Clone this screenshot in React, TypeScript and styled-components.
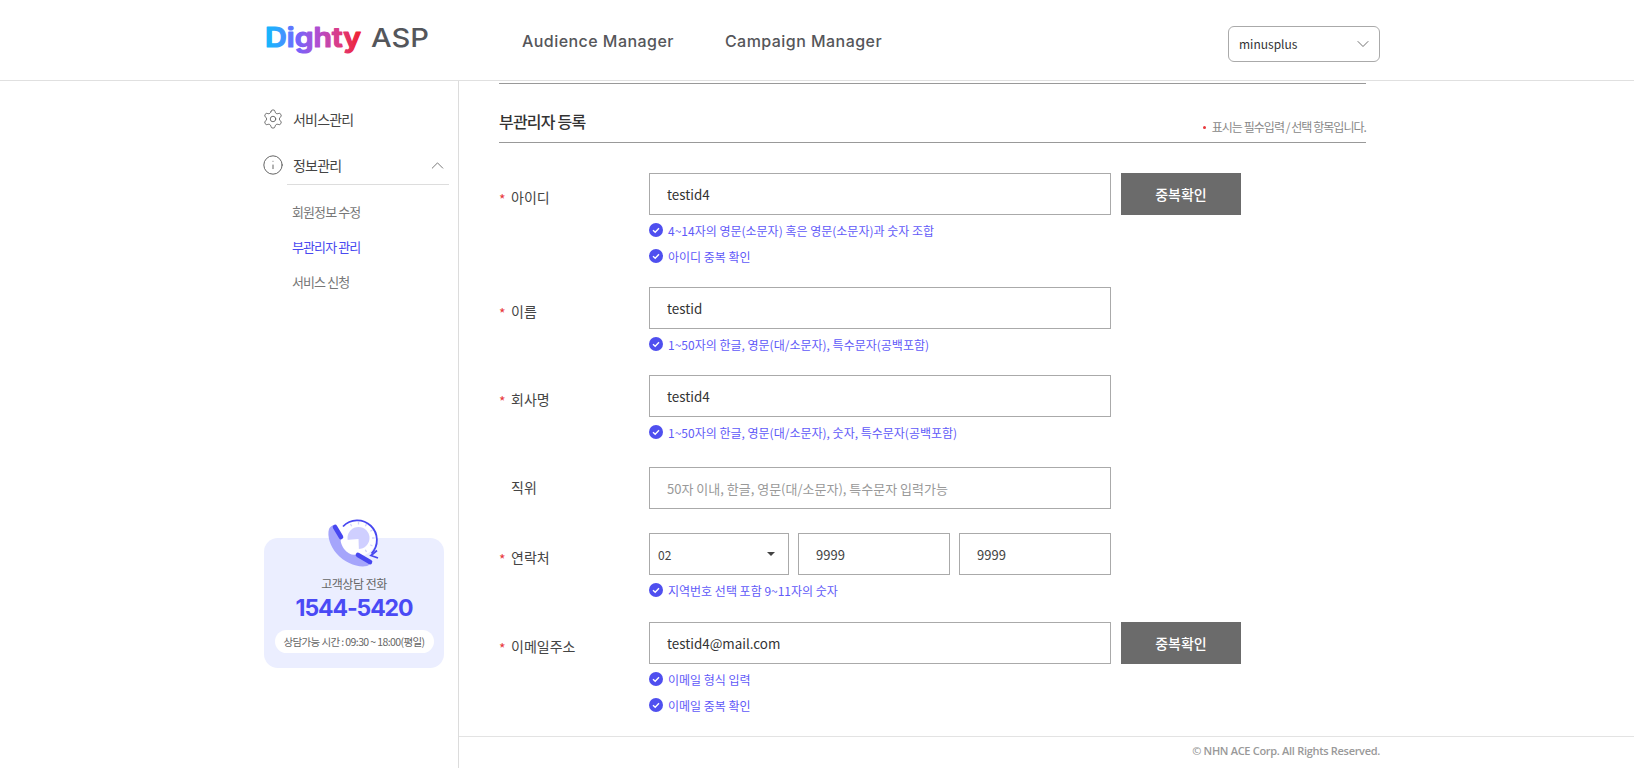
import React from "react";
import styled, { createGlobalStyle } from "styled-components";
import { ChevronDown, ChevronUp, Info, Settings } from "lucide-react";

const KR = `"Noto Sans CJK KR", "Noto Sans", sans-serif`;

const GlobalStyle = createGlobalStyle`
  html, body {
    margin: 0;
    padding: 0;
    background: #fff;
    overflow: hidden;
  }
  * {
    box-sizing: border-box;
  }
`;

const CheckIcon = () => (
  <svg width="14" height="14" viewBox="0 0 14 14" style={{ flex: "none" }}>
    <circle cx="7" cy="7" r="7" fill="#4f4fef" />
    <path d="M4 7.2 L6.2 9.2 L10 5.2" fill="none" stroke="#fff" strokeWidth="1.4" />
  </svg>
);

const Logo = () => (
  <svg width="170" height="48" viewBox="0 0 170 48">
    <defs>
      <linearGradient id="dighty" gradientUnits="userSpaceOnUse" x1="1" x2="97" y1="0" y2="0">
        <stop offset="0" stopColor="#12b8fb" />
        <stop offset="0.14" stopColor="#2fa4ff" />
        <stop offset="0.32" stopColor="#6f66ff" />
        <stop offset="0.55" stopColor="#b04ed0" />
        <stop offset="0.78" stopColor="#de3a80" />
        <stop offset="1" stopColor="#f0202c" />
      </linearGradient>
    </defs>
    <text
      x="1"
      y="30"
      fontFamily="Inter, sans-serif"
      fontWeight="600"
      fontSize="27"
      textLength="96"
      lengthAdjust="spacingAndGlyphs"
      fill="url(#dighty)"
      stroke="url(#dighty)"
      strokeWidth="1.2"
      strokeLinejoin="round"
    >
      Dighty
    </text>
    <text x="107" y="30" fontFamily="Inter, sans-serif" fontWeight="500" fontSize="26" textLength="58" lengthAdjust="spacingAndGlyphs" fill="#54565b">
      ASP
    </text>
  </svg>
);

const PhoneArt = () => (
  <svg width="70" height="62" viewBox="0 0 70 62">
    <circle cx="38.5" cy="26" r="18" fill="#fff" />
    <circle cx="38.5" cy="26" r="11" fill="#cfcfff" />
    <path d="M38.5 27 L39 41 L30 42 L21 29 L26 28 Z" fill="#fff" />
    <g stroke="#d2d3fa" strokeWidth="1.3">
      <path d="M38.5 10 v2.5 M46.5 12 l-1.2 2.2 M52.5 18 l-2.2 1.2 M54.5 26 h-2.5 M52.5 34 l-2.2 -1.2 M46.5 40 l-1.2 -2.2 M30.5 12 l1.2 2.2" />
    </g>
    <path d="M23 14.5 A19.5 19.5 0 1 1 51.5 41.5" fill="none" stroke="#4747f0" strokeWidth="1.8" />
    <path d="M57 38.5 L51 43.5 L58 46" fill="none" stroke="#4747f0" strokeWidth="1.8" />
    <path d="M9 17 C7 24 10 34 17 42 C25 51 38 56 47 54 C50 53 52 50 51 49 L38 42 C33 44 28 42 24 37 C20 31 20 27 22 24 L15 13 C12 13 10 15 9 17 Z" fill="#a5a5fb" />
    <path d="M15 15 L21 25" stroke="#4747f0" strokeWidth="4.6" strokeLinecap="round" />
    <path d="M38 43 L50 50" stroke="#4747f0" strokeWidth="4.6" strokeLinecap="round" />
  </svg>
);

const App = () => {
  return (
    <Page>
      <GlobalStyle />
      <Header>
        <LogoLink>
          <Logo />
        </LogoLink>
        <TopNav>
          <TopNavItem>Audience Manager</TopNavItem>
          <TopNavItem>Campaign Manager</TopNavItem>
        </TopNav>
        <AccountSelect>
          <span>minusplus</span>
          <ChevronDown size={20} strokeWidth={1} color="#555" />
        </AccountSelect>
      </Header>
      <Body>
        <Sidebar>
          <div>
            <MenuTitle>
              <Settings size={22} strokeWidth={0.9} color="#555" />
              <span>서비스관리</span>
            </MenuTitle>
            <MenuTitle $open>
              <Info size={22} strokeWidth={1} color="#555" />
              <span>정보관리</span>
              <ChevronUp size={21} strokeWidth={1} color="#666" />
            </MenuTitle>
            <SubMenu>
              <SubItem>회원정보 수정</SubItem>
              <SubItem $active>부관리자 관리</SubItem>
              <SubItem>서비스 신청</SubItem>
            </SubMenu>
          </div>
          <CallCard>
            <CallArt>
              <PhoneArt />
            </CallArt>
            <CallLabel>고객상담 전화</CallLabel>
            <CallNumber>1544-5420</CallNumber>
            <CallHours>상담가능 시간 : 09:30 ~ 18:00(평일)</CallHours>
          </CallCard>
        </Sidebar>
        <Main>
          <Content>
            <TopRule />
            <TitleRow>
              <Title>부관리자 등록</Title>
              <Legend>
                <LegendDot />
                표시는 필수입력 / 선택 항목입니다.
              </Legend>
            </TitleRow>
            <FormRow
              label="아이디"
              required
              value="testid4"
              button
              hints={["4~14자의 영문(소문자) 혹은 영문(소문자)과 숫자 조합", "아이디 중복 확인"]}
            />
            <FormRow label="이름" required value="testid" hints={["1~50자의 한글, 영문(대/소문자), 특수문자(공백포함)"]} />
            <FormRow
              label="회사명"
              required
              value="testid4"
              gap={21}
              hints={["1~50자의 한글, 영문(대/소문자), 숫자, 특수문자(공백포함)"]}
            />
            <FormRow label="직위" placeholder="50자 이내, 한글, 영문(대/소문자), 특수문자 입력가능" gap={24} labelTop={10} />
            <Row $gap={18}>
              <Label $top={14}>
                <Star>*</Star>연락처
              </Label>
              <Field>
                <PhoneLine>
                  <AreaSelect>
                    02
                    <Caret />
                  </AreaSelect>
                  <PhoneInput readOnly value="9999" />
                  <PhoneInput readOnly value="9999" />
                </PhoneLine>
                <HintList>
                  <HintItem>
                    <CheckIcon />
                    지역번호 선택 포함 9~11자의 숫자
                  </HintItem>
                </HintList>
              </Field>
            </Row>
            <FormRow label="이메일주소" required value="testid4@mail.com" button gap={0} hints={["이메일 형식 입력", "이메일 중복 확인"]} />
          </Content>
          <Footer>© NHN ACE Corp. All Rights Reserved.</Footer>
        </Main>
      </Body>
    </Page>
  );
};

const FormRow = ({
  label,
  required,
  value,
  placeholder,
  button,
  hints = [],
  gap = 17,
  labelTop = 14,
}: {
  label: string;
  required?: boolean;
  value?: string;
  placeholder?: string;
  button?: boolean;
  hints?: string[];
  gap?: number;
  labelTop?: number;
}) => (
  <Row $gap={gap}>
    <Label $top={labelTop}>
      {required && <Star>*</Star>}
      {label}
    </Label>
    <Field>
      <InputLine>
        <TextInput readOnly value={value} placeholder={placeholder} />
        {button && <CheckButton>중복확인</CheckButton>}
      </InputLine>
      {hints.length > 0 && (
        <HintList>
          {hints.map((h) => (
            <HintItem key={h}>
              <CheckIcon />
              {h}
            </HintItem>
          ))}
        </HintList>
      )}
    </Field>
  </Row>
);

export default App;

const Page = styled.div`
  width: 100%;
  height: 768px;
  display: flex;
  flex-direction: column;
  overflow: hidden;
  font-family: ${KR};
  color: #333;
`;
const Header = styled.header`
  height: 81px;
  flex: none;
  display: flex;
  align-items: flex-start;
  padding: 0 254px 0 264px;
  border-bottom: 1px solid #e0e0e0;
`;
const LogoLink = styled.div`
  width: 258px;
  padding-top: 17px;
`;
const TopNav = styled.nav`
  flex: 1;
  display: flex;
  gap: 51px;
  padding-top: 30px;
`;
const TopNavItem = styled.div`
  font-family: Inter, sans-serif;
  font-size: 16px;
  font-weight: 500;
  line-height: 22px;
  letter-spacing: 0.45px;
  color: #55565a;
`;
const AccountSelect = styled.div`
  width: 152px;
  height: 36px;
  margin-top: 26px;
  display: flex;
  justify-content: space-between;
  align-items: center;
  padding: 0 6px 0 10px;
  border: 1px solid #aaa;
  border-radius: 6px;
  font-size: 12px;
  color: #333;
  span {
    padding-bottom: 2px;
  }
`;
const Body = styled.div`
  flex: 1;
  display: flex;
  min-height: 0;
`;
const Sidebar = styled.aside`
  width: 459px;
  flex: none;
  display: flex;
  flex-direction: column;
  justify-content: space-between;
  padding: 21px 0 100px 264px;
  border-right: 1px solid #dcdcdc;
`;
const MenuTitle = styled.div<{ $open?: boolean }>`
  display: flex;
  align-items: center;
  gap: 9px;
  height: 34px;
  margin-left: -2px;
  margin-bottom: ${(p) => (p.$open ? "0" : "12px")};
  font-size: 14px;
  letter-spacing: -0.8px;
  color: #444;
  span {
    flex: 1;
  }
  svg:last-child:not(:first-child) {
    margin-right: 10px;
  }
`;
const SubMenu = styled.ul`
  list-style: none;
  margin: 2px 9px 0 23px;
  padding: 9px 0 0 5px;
  border-top: 1px solid #ddd;
`;
const SubItem = styled.li<{ $active?: boolean }>`
  height: 35px;
  display: flex;
  align-items: center;
  font-size: 13px;
  letter-spacing: -0.9px;
  color: ${(p) => (p.$active ? "#4a4af0" : "#777")};
`;
const CallCard = styled.div`
  position: relative;
  width: 180px;
  height: 130px;
  padding-top: 37px;
  display: flex;
  flex-direction: column;
  align-items: center;
  background: #ebeeff;
  border-radius: 14px;
`;
const CallArt = styled.div`
  position: absolute;
  top: -26px;
  left: 56px;
  line-height: 0;
`;
const CallLabel = styled.div`
  font-size: 12px;
  line-height: 18px;
  letter-spacing: -0.5px;
  color: #666;
`;
const CallNumber = styled.div`
  font-family: Inter, sans-serif;
  font-size: 23px;
  font-weight: 700;
  line-height: 30px;
  letter-spacing: -1.1px;
  color: #4a4af5;
`;
const CallHours = styled.div`
  margin-top: 7px;
  width: 159px;
  height: 23px;
  display: flex;
  align-items: center;
  justify-content: center;
  background: #fff;
  border-radius: 12px;
  font-size: 10.5px;
  letter-spacing: -0.6px;
  color: #666;
`;
const Main = styled.main`
  flex: 1;
  display: flex;
  flex-direction: column;
  min-width: 0;
`;
const Content = styled.div`
  flex: 1;
  padding: 2px 268px 0 40px;
  overflow: hidden;
`;
const TopRule = styled.div`
  height: 1px;
  background: #999;
`;
const TitleRow = styled.div`
  height: 59px;
  display: flex;
  justify-content: space-between;
  align-items: flex-end;
  padding-bottom: 6px;
  margin-bottom: 30px;
  border-bottom: 1px solid #999;
`;
const Title = styled.h2`
  margin: 0;
  font-size: 16px;
  font-weight: 500;
  line-height: 30px;
  letter-spacing: -0.8px;
  color: #333;
`;
const Legend = styled.div`
  display: flex;
  align-items: center;
  gap: 6px;
  font-size: 12px;
  line-height: 20px;
  letter-spacing: -0.95px;
  color: #888;
  position: relative;
  top: 1px;
`;
const LegendDot = styled.i`
  width: 3px;
  height: 3px;
  border-radius: 50%;
  background: #e8383b;
`;
const Row = styled.div<{ $gap: number }>`
  display: flex;
  margin-bottom: ${(p) => p.$gap}px;
`;
const Label = styled.div<{ $top: number }>`
  width: 150px;
  flex: none;
  display: flex;
  padding-top: ${(p) => p.$top}px;
  padding-left: 12px;
  position: relative;
  font-size: 14px;
  line-height: 21px;
  color: #444;
`;
const Star = styled.span`
  position: absolute;
  left: 0;
  top: 18px;
  font-size: 14px;
  line-height: 16px;
  color: #e8383b;
`;
const Field = styled.div`
  flex: 1;
`;
const InputLine = styled.div`
  display: flex;
  gap: 10px;
`;
const TextInput = styled.input`
  width: 462px;
  height: 42px;
  padding: 0 17px;
  border: 1px solid #aaa;
  border-radius: 0;
  outline: none;
  font-family: ${KR};
  font-size: 13.4px;
  color: #333;
  &::placeholder {
    color: #999;
    font-size: 13px;
  }
`;
const CheckButton = styled.button`
  width: 120px;
  height: 42px;
  border: none;
  background: #6b6b6b;
  font-family: ${KR};
  font-size: 14px;
  font-weight: 500;
  color: #fff;
`;
const PhoneLine = styled.div`
  width: 462px;
  display: flex;
  gap: 9px;
`;
const AreaSelect = styled.div`
  flex: 1;
  height: 42px;
  display: flex;
  justify-content: space-between;
  align-items: center;
  padding: 0 13px 0 8px;
  border: 1px solid #aaa;
  font-size: 12px;
  color: #444;
`;
const Caret = styled.i`
  width: 0;
  height: 0;
  border-left: 4px solid transparent;
  border-right: 4px solid transparent;
  border-top: 4px solid #444;
`;
const PhoneInput = styled.input`
  width: 152px;
  height: 42px;
  padding: 0 17px;
  border: 1px solid #aaa;
  border-radius: 0;
  outline: none;
  font-family: ${KR};
  font-size: 13px;
  color: #444;
`;
const HintList = styled.ul`
  list-style: none;
  margin: 2px 0 1px;
  padding: 0;
`;
const HintItem = styled.li`
  height: 26px;
  display: flex;
  align-items: center;
  gap: 5px;
  font-size: 12px;
  color: #5f5af8;
`;
const Footer = styled.footer`
  height: 32px;
  flex: none;
  display: flex;
  justify-content: flex-end;
  align-items: center;
  padding: 0 254px 5px 0;
  border-top: 1px solid #e3e3e3;
  font-family: "Open Sans", sans-serif;
  font-size: 11px;
  font-weight: 600;
  letter-spacing: -0.3px;
  color: #999;
`;
